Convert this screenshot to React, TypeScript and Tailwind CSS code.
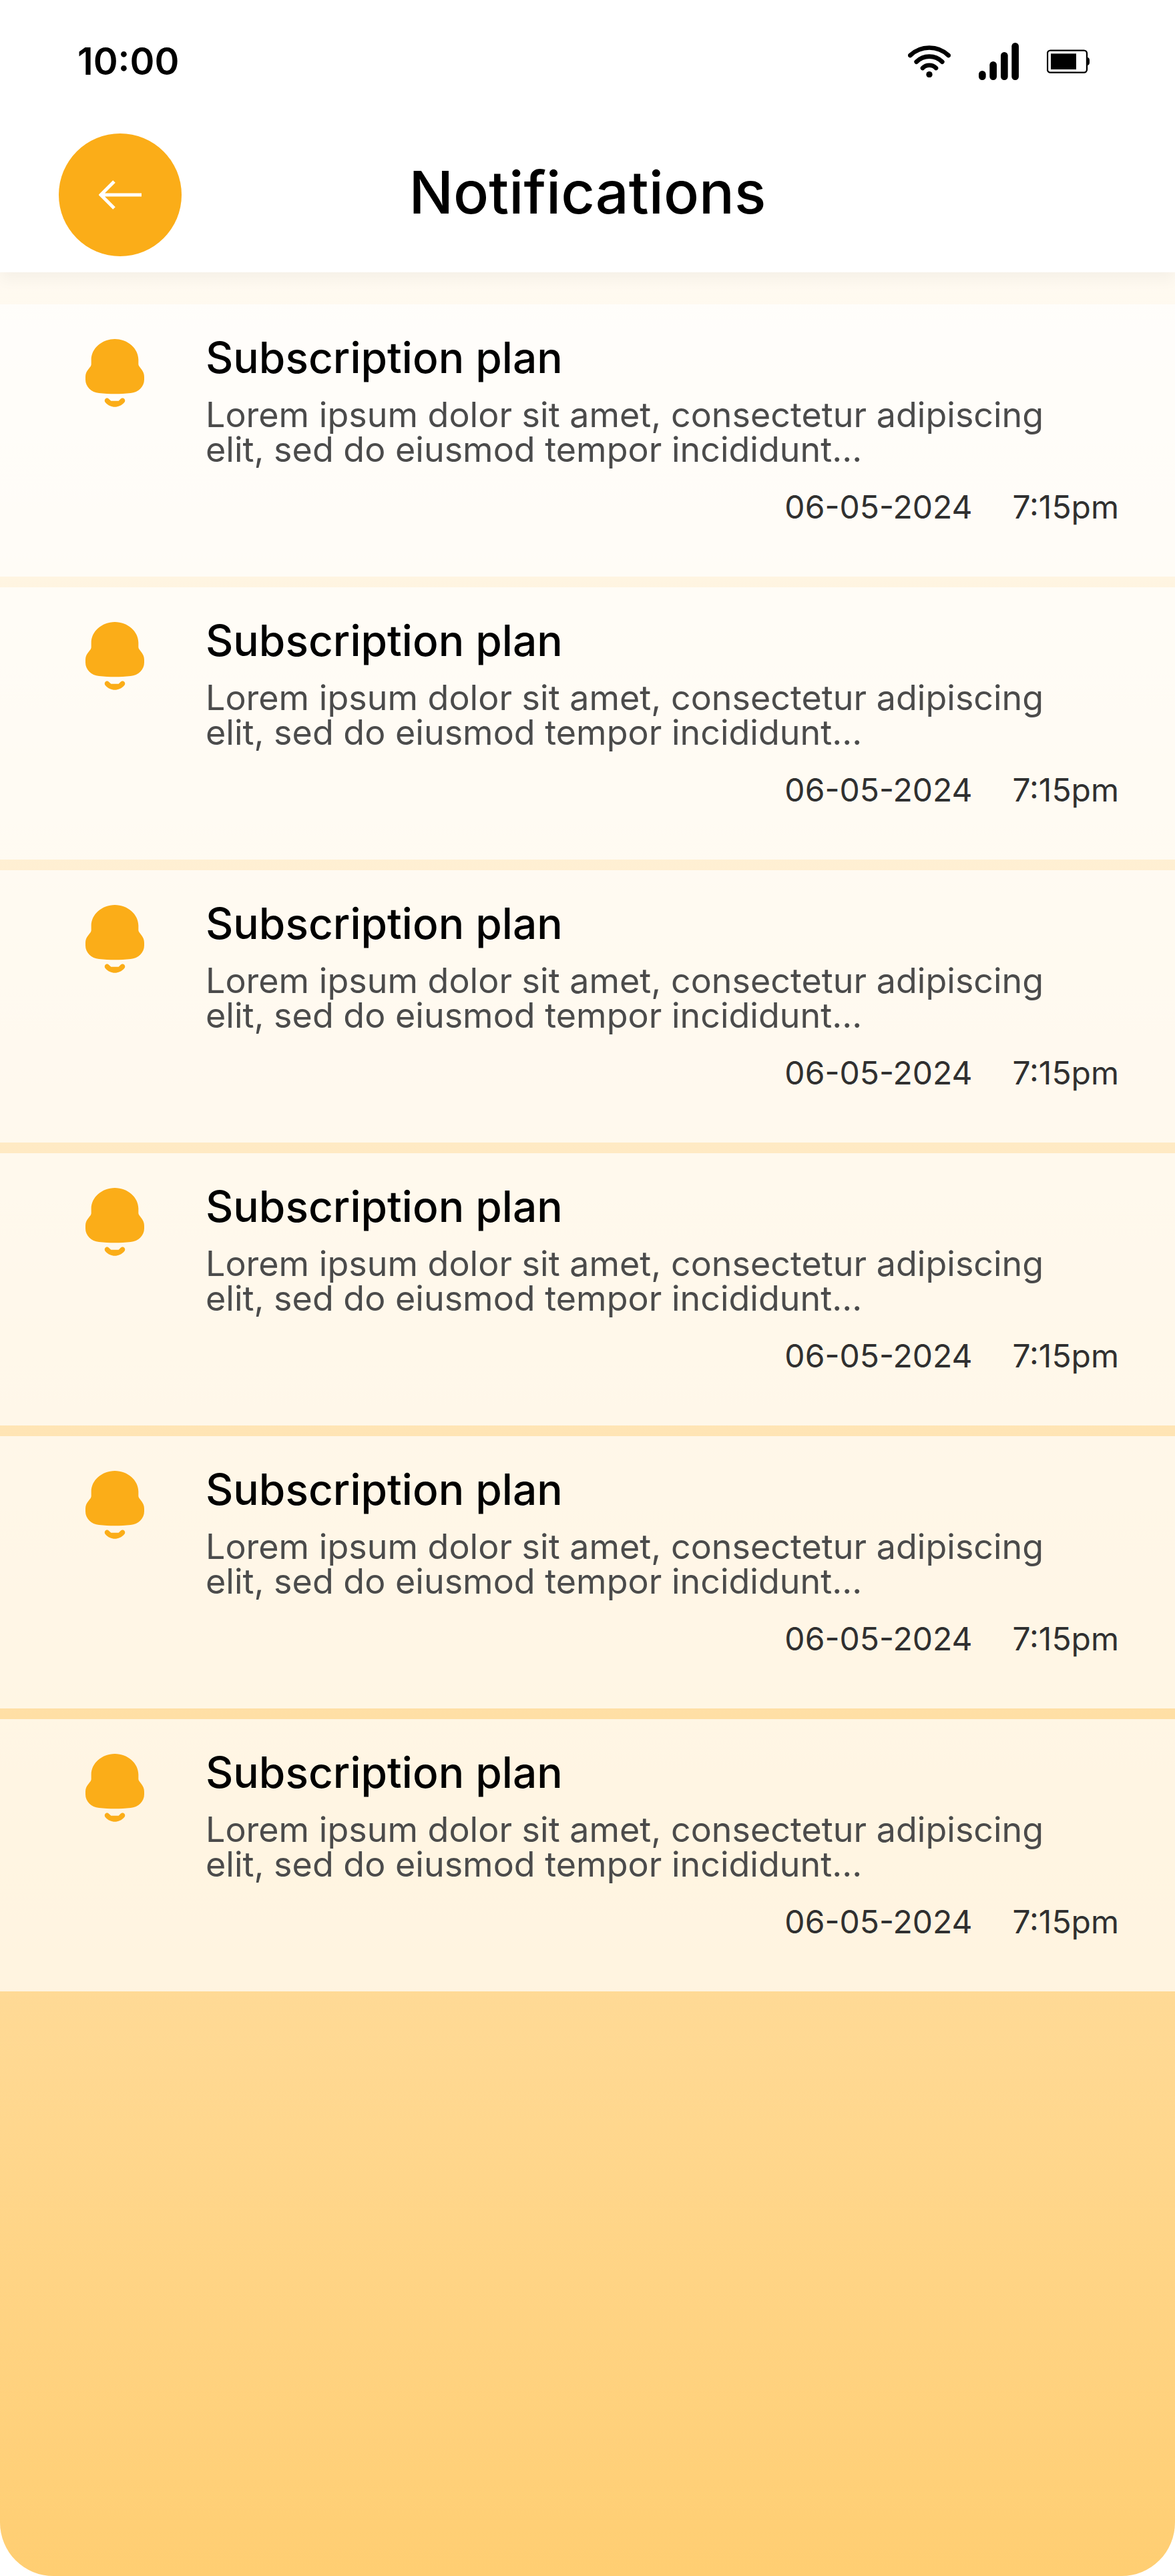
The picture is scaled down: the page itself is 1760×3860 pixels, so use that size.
interface Notification {
  id: number
  title: string
  message: string
  date: string
  time: string
}

const notifications: Notification[] = [1, 2, 3, 4, 5, 6].map((id) => ({
  id,
  title: "Subscription plan",
  message: "Lorem ipsum dolor sit amet, consectetur adipiscing elit, sed do eiusmod tempor incididunt...",
  date: "06-05-2024",
  time: "7:15pm",
}))

function WifiIcon() {
  return (
    <svg className="h-12 w-16" viewBox="0 0 192 144" fill="none" stroke="currentColor" strokeWidth="20" strokeLinecap="round" aria-hidden="true">
      <path d="M10 45C58 -1 134 -1 182 45" />
      <path d="M38 74C70 42 122 42 154 74" />
      <path d="M66 102C82 85 110 85 126 102" />
      <circle cx="96" cy="131" r="14" fill="currentColor" stroke="none" />
    </svg>
  )
}

function SignalIcon() {
  return (
    <svg className="h-14 w-15" viewBox="0 0 180 168" fill="currentColor" aria-hidden="true">
      <rect x="0" y="126" width="32" height="42" rx="16" />
      <rect x="49" y="84" width="32" height="84" rx="16" />
      <rect x="99" y="42" width="32" height="126" rx="16" />
      <rect x="148" y="0" width="32" height="168" rx="16" />
    </svg>
  )
}

function BatteryIcon() {
  return (
    <svg className="h-9 w-16" viewBox="0 0 192 108" aria-hidden="true">
      <rect x="3" y="5" width="177" height="99" rx="13" fill="none" stroke="currentColor" strokeWidth="7" />
      <rect x="18" y="19" width="114" height="71" fill="currentColor" />
      <path d="M181 36C188 36 192 41 192 48V60C192 67 188 72 181 72Z" fill="currentColor" />
    </svg>
  )
}

function BellIcon() {
  return (
    <svg className="h-[102px] w-[88px] shrink-0" viewBox="0 0 264 306" fill="currentColor" aria-hidden="true">
      <path d="M132 0C190 0 238 43 238 93V113C238 117 241 122 244 126L253 138C260 148 264 158 264 170V182C264 214 238 240 203 243C157 248 107 248 61 243C26 240 0 214 0 182V170C0 158 4 148 11 139L20 127C24 122 26 117 26 113V93C26 43 74 0 132 0Z" />
      <path d="M105 269L115 278H149L158 269C164 264 172 265 176 271C179 276 178 282 174 286C152 312 112 312 90 286C86 282 85 276 88 271C92 265 100 264 105 269Z" />
    </svg>
  )
}

function StatusBar() {
  return (
    <div className="flex items-center justify-between pt-14 pr-32 pl-29">
      <span className="text-[56px] leading-[72px] font-semibold">10:00</span>
      <div className="flex items-center gap-[42px]">
        <WifiIcon />
        <SignalIcon />
        <BatteryIcon />
      </div>
    </div>
  )
}

function NotificationCard({ notification }: { notification: Notification }) {
  return (
    <li className="flex gap-[92px] bg-white/70 pt-12 pr-[84px] pb-[72px] pl-32 text-[#fbad18]">
      <div className="pt-1">
        <BellIcon />
      </div>
      <div className="min-w-0 flex-1">
        <h2 className="text-[64px] leading-[64px] font-medium text-black">{notification.title}</h2>
        <p className="mt-7 max-w-[1300px] text-[52px] leading-[52px] text-[#4b4b4b]">{notification.message}</p>
        <div className="mt-7 flex justify-end gap-15 text-[48px] leading-[64px] text-[#303030]">
          <span>{notification.date}</span>
          <span>{notification.time}</span>
        </div>
      </div>
    </li>
  )
}

export default function App() {
  return (
    <div className="min-h-screen bg-white font-['Inter',sans-serif] text-black">
      <div className="min-h-screen overflow-hidden rounded-b-[80px] bg-linear-to-b from-white to-[#ffce72]">
        <header className="bg-white pb-6 shadow-[0_12px_20px_rgba(0,0,0,0.04)]">
          <StatusBar />
          <div className="mt-18 grid grid-cols-[184px_1fr_184px] items-center px-22">
            <button type="button" aria-label="Back" className="flex size-46 items-center justify-center rounded-full bg-[#fbad18] text-white">
              <svg className="h-11 w-16" viewBox="0 0 64 44" fill="none" stroke="currentColor" strokeWidth="5" aria-hidden="true">
                <path d="M64 22H3M23 2L3 22L23 42" />
              </svg>
            </button>
            <h1 className="pb-2 text-center text-[88px] leading-[104px] font-medium">Notifications</h1>
          </div>
        </header>

        <ul className="mt-12 flex flex-col gap-4">
          {notifications.map((notification) => (
            <NotificationCard key={notification.id} notification={notification} />
          ))}
        </ul>
      </div>
    </div>
  )
}
